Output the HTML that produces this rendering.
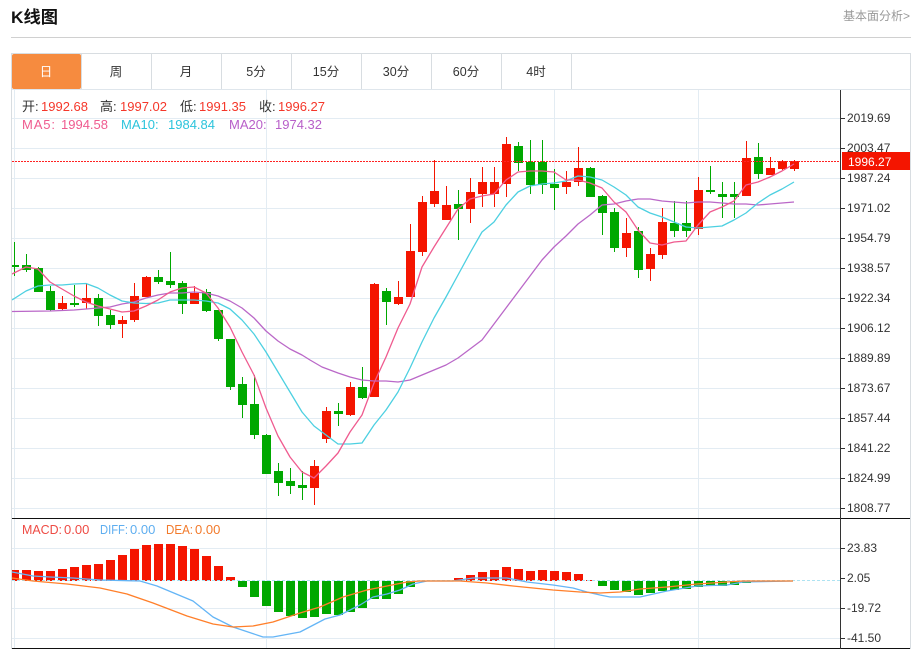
<!DOCTYPE html>
<html lang="zh"><head><meta charset="utf-8"><title>K线图</title>
<style>
html,body{margin:0;padding:0;background:#fff;width:919px;height:649px;overflow:hidden}
svg{display:block}
text{font-family:"Liberation Sans","Noto Sans CJK SC",sans-serif;font-size:13px}
.ax{font-size:12px;fill:#333}
.tab{fill:#333;text-anchor:middle;font-size:12.5px}
polyline{stroke-linejoin:round}
</style></head><body>
<svg width="919" height="649" viewBox="0 0 919 649" xmlns="http://www.w3.org/2000/svg">
<defs><clipPath id="c1"><rect x="12" y="90" width="828" height="428"/></clipPath><clipPath id="c2"><rect x="12" y="519" width="828" height="129"/></clipPath></defs>
<text x="11" y="23" style="font-size:17px;font-weight:bold" fill="#111" textLength="47" lengthAdjust="spacingAndGlyphs">K线图</text>
<text x="910" y="20" style="font-size:12px" fill="#999" text-anchor="end">基本面分析&gt;</text>
<path d="M11 37.5H911" stroke="#d0d0d0" fill="none"/>
<path d="M11.5 53.5H910.5V649M11.5 53V649" stroke="#d8dde1" fill="none"/>
<path d="M12 89.5H910" stroke="#dfe6ec" fill="none"/>
<path d="M81.5 54V89M151.5 54V89M221.5 54V89M291.5 54V89M361.5 54V89M431.5 54V89M501.5 54V89M571.5 54V89" stroke="#d8dde1" fill="none"/>
<rect x="12" y="54" width="69" height="35" rx="2" fill="#f68b3f"/>
<text x="46" y="76" class="tab" style="fill:#fff">日</text>
<text x="116" y="76" class="tab">周</text>
<text x="186" y="76" class="tab">月</text>
<text x="256" y="76" class="tab">5分</text>
<text x="326" y="76" class="tab">15分</text>
<text x="396" y="76" class="tab">30分</text>
<text x="466" y="76" class="tab">60分</text>
<text x="536" y="76" class="tab">4时</text>
<!-- grid -->
<path d="M12 118.5H840M12 148.5H840M12 178.5H840M12 208.5H840M12 238.5H840M12 268.5H840M12 298.5H840M12 328.5H840M12 358.5H840M12 388.5H840M12 418.5H840M12 448.5H840M12 478.5H840M12 508.5H840M12 548.5H840M12 608.5H840M12 638.5H840M14.5 90V648M266.5 90V648M554.5 90V648M698.5 90V648" stroke="#e3ecf3" fill="none"/>
<g clip-path="url(#c1)">
<path fill="none" stroke="#00a800" d="M14.5 242V276M26.5 254V272M38.5 267V292M50.5 286V311M74.5 285V307M98.5 294V326M110.5 310V329M158.5 270V284M170.5 252V288M182.5 281V314M206.5 289V312M218.5 310V341M230.5 339V390M242.5 377V418M254.5 375V439M266.5 434V474M278.5 463V496M290.5 468V494M302.5 471V500M338.5 403V426M362.5 367V399M386.5 288V325M458.5 190V240M518.5 142V171M530.5 140V194M542.5 140V194M554.5 169V210M590.5 167V197M602.5 195V235M614.5 208V252M638.5 227V278M674.5 201V237M686.5 201V237M710.5 166V194M722.5 182V218M734.5 182V218M758.5 143V179"/>
<path fill="none" stroke="#f41500" d="M62.5 296V310M86.5 283V309M122.5 316V338M134.5 283V322M146.5 276V297M194.5 286V304M314.5 460V505M326.5 407V443M350.5 382V416M374.5 283V397M398.5 281V305M410.5 224V297M422.5 196V256M434.5 160V207M446.5 186V220M470.5 178V223M482.5 167V207M494.5 167V207M506.5 137V197M566.5 171V194M578.5 147V186M626.5 218V257M650.5 248V281M662.5 208V259M698.5 177V235M746.5 141V196M770.5 157V175M782.5 160V170M794.5 160V171"/>
<path fill="#00a800" d="M10 265h9v2h-9zM22 265h9v5h-9zM34 268h9v24h-9zM46 291h9v19h-9zM70 303h9v2h-9zM94 298h9v18h-9zM106 315h9v10h-9zM154 277h9v5h-9zM166 281h9v4h-9zM178 283h9v21h-9zM202 292h9v19h-9zM214 310h9v29h-9zM226 339h9v48h-9zM238 384h9v21h-9zM250 404h9v31h-9zM262 435h9v39h-9zM274 471h9v12h-9zM286 481h9v5h-9zM298 485h9v3h-9zM334 411h9v3h-9zM358 387h9v11h-9zM382 291h9v11h-9zM454 204h9v5h-9zM514 146h9v17h-9zM526 162h9v23h-9zM538 162h9v23h-9zM550 184h9v4h-9zM586 168h9v29h-9zM598 196h9v17h-9zM610 212h9v36h-9zM634 231h9v39h-9zM670 223h9v8h-9zM682 223h9v8h-9zM706 190h9v2h-9zM718 194h9v3h-9zM730 194h9v3h-9zM754 157h9v17h-9z"/>
<path fill="#f41500" d="M58 303h9v6h-9zM82 298h9v5h-9zM118 320h9v4h-9zM130 296h9v24h-9zM142 277h9v20h-9zM190 293h9v11h-9zM310 466h9v22h-9zM322 411h9v28h-9zM346 387h9v28h-9zM370 284h9v113h-9zM394 297h9v7h-9zM406 251h9v46h-9zM418 202h9v50h-9zM430 191h9v13h-9zM442 205h9v15h-9zM466 192h9v17h-9zM478 182h9v12h-9zM490 182h9v12h-9zM502 144h9v40h-9zM562 182h9v5h-9zM574 168h9v14h-9zM622 233h9v15h-9zM646 254h9v15h-9zM658 222h9v33h-9zM694 190h9v39h-9zM742 158h9v38h-9zM766 168h9v7h-9zM778 161h9v8h-9zM790 161h9v8h-9z"/>
<polyline fill="none" stroke="#ba68c8" stroke-width="1.3" points="12,311.5 50,311 74,310 86,309 98,308 110,307 122,304 134,302 146,298 158,295 170,293 182,293 194,292 206,293 218,296 230,301 242,308 254,318 266,331 278,341 290,349 302,355 310,360 322,367 338,373 350,377 362,380 374,381 386,381 398,382 410,380 422,375 434,370 446,365 458,358 470,349 482,340 494,324 506,308 518,292 530,276 542,260 554,247 566,236 578,224 590,215 602,205 614,204 626,201 638,199 650,199 662,201 674,202 686,203 698,202 710,202 722,203 734,204 746,204 758,205 770,204 782,203 794,202"/>
<polyline fill="none" stroke="#4dd0e1" stroke-width="1.3" points="12,300 26,291 38,286 50,285 62,285 74,284 86,283.5 98,288 110,295 122,301 134,303 146,303.5 158,303 170,300 182,300 194,300 206,301 218,303 230,309 242,320 254,334 266,352 278,372 290,392 302,412 314,426 326,435 338,444 350,444 362,443 374,425 386,410 398,392 410,368 422,342 434,318 446,297 458,275 470,253 482,232 494,222 506,205 518,192 530,186 542,184 554,183 566,181 578,176 590,177 602,180 614,187 626,195 638,207 650,213 662,217 674,222 686,227 698,228 710,227 722,226 734,220 746,213 758,203 770,195 782,189 794,182"/>
<polyline fill="none" stroke="#ef5b8f" stroke-width="1.3" points="12,274 26,267 38,269 50,282 62,289 74,296 86,302 98,306 110,309 122,312 134,311 146,306 158,300 170,292 182,288 194,287 206,293 218,308 230,327 242,352 254,375 266,408 278,436 290,457 302,472 314,478 326,466 338,453 350,432 362,415 374,383 386,357 398,328 410,304 422,267 434,247 446,228 458,209 470,199 482,196 494,194 506,180 518,172 530,171 542,171 554,172 566,180 578,180 590,183 602,188 614,202 626,212 638,230 650,243 662,245 674,242 686,241 698,225 710,212 722,207 734,201 746,185 758,182 770,177 782,171 794,164"/>
</g>
<path d="M12 161.5H840" stroke="#f22" stroke-dasharray="2 1" fill="none"/>
<!-- MACD -->
<g clip-path="url(#c2)">
<path fill="#f41500" d="M10 570h9v11h-9zM22 570h9v11h-9zM34 571h9v10h-9zM46 571h9v10h-9zM58 569h9v12h-9zM70 567h9v14h-9zM82 565h9v16h-9zM94 564h9v17h-9zM106 560h9v21h-9zM118 555h9v26h-9zM130 549h9v32h-9zM142 545h9v36h-9zM154 544h9v37h-9zM166 544h9v37h-9zM178 546h9v35h-9zM190 549h9v32h-9zM202 556h9v25h-9zM214 566h9v15h-9zM226 577h9v4h-9zM454 578h9v3h-9zM466 575h9v6h-9zM478 572h9v9h-9zM490 570h9v11h-9zM502 567h9v14h-9zM514 569h9v12h-9zM526 571h9v10h-9zM538 570h9v11h-9zM550 571h9v10h-9zM562 572h9v9h-9zM574 574h9v7h-9zM586 580h9v1h-9z"/>
<path fill="#00a800" d="M238 581h9v6h-9zM250 581h9v16h-9zM262 581h9v25h-9zM274 581h9v31h-9zM286 581h9v35h-9zM298 581h9v37h-9zM310 581h9v36h-9zM322 581h9v33h-9zM334 581h9v34h-9zM346 581h9v31h-9zM358 581h9v27h-9zM370 581h9v18h-9zM382 581h9v18h-9zM394 581h9v13h-9zM406 581h9v6h-9zM598 581h9v5h-9zM610 581h9v9h-9zM622 581h9v11h-9zM634 581h9v14h-9zM646 581h9v12h-9zM658 581h9v10h-9zM670 581h9v9h-9zM682 581h9v8h-9zM694 581h9v6h-9zM706 581h9v5h-9zM718 581h9v5h-9zM730 581h9v4h-9zM742 581h9v2h-9z"/>
<path d="M12 580.5H840" stroke="#aee3f2" stroke-dasharray="3 2" fill="none"/>
<polyline fill="none" stroke="#64b5f6" stroke-width="1.3" points="12,572 33,576 50,577 73,578 100,580 140,581 157,586 193,601 213,617 233,627 263,637 273,637 300,632 325,619 340,615 360,605 373,597 387,594 400,590 413,584 427,581 453,581 473,578 507,578 527,582 553,585 573,588 587,592 600,595 610,597 640,597 667,591 697,586 727,585 743,582 793,581"/>
<polyline fill="none" stroke="#ff7f2a" stroke-width="1.3" points="12,578 33,581 67,584 100,588 127,594 153,603 187,616 213,624 233,627 253,626 273,622 300,613 320,607 343,597 367,590 387,586 407,582 420,581 460,581 487,583 513,586 553,590 580,592 600,593 620,592 640,589 667,587 697,584 727,582 743,581 793,581"/>
</g>
<path d="M12 518.5H910M12 648.5H910" stroke="#111" fill="none"/>
<path d="M840.5 90V649M840 118.5h5M840 148.5h5M840 178.5h5M840 208.5h5M840 238.5h5M840 268.5h5M840 298.5h5M840 328.5h5M840 358.5h5M840 388.5h5M840 418.5h5M840 448.5h5M840 478.5h5M840 508.5h5M840 548.5h5M840 578.5h5M840 608.5h5M840 638.5h5" stroke="#333" fill="none"/>
<g class="ax">
<text class="ax" x="847" y="122">2019.69</text>
<text class="ax" x="847" y="152">2003.47</text>
<text class="ax" x="847" y="182">1987.24</text>
<text class="ax" x="847" y="212">1971.02</text>
<text class="ax" x="847" y="242">1954.79</text>
<text class="ax" x="847" y="272">1938.57</text>
<text class="ax" x="847" y="302">1922.34</text>
<text class="ax" x="847" y="332">1906.12</text>
<text class="ax" x="847" y="362">1889.89</text>
<text class="ax" x="847" y="392">1873.67</text>
<text class="ax" x="847" y="422">1857.44</text>
<text class="ax" x="847" y="452">1841.22</text>
<text class="ax" x="847" y="482">1824.99</text>
<text class="ax" x="847" y="512">1808.77</text>
<text class="ax" x="847" y="552">23.83</text>
<text class="ax" x="847" y="582">2.05</text>
<text class="ax" x="847" y="612">-19.72</text>
<text class="ax" x="847" y="642">-41.50</text>
</g>
<rect x="842" y="152" width="68" height="18" fill="#f41500"/>
<text x="848" y="166" fill="#fff" style="font-size:12px">1996.27</text>
<!-- legend -->
<text x="22" y="111" fill="#333">开:</text><text x="41" y="111" fill="#f5372a">1992.68</text>
<text x="100" y="111" fill="#333">高:</text><text x="120" y="111" fill="#f5372a">1997.02</text>
<text x="180" y="111" fill="#333">低:</text><text x="199" y="111" fill="#f5372a">1991.35</text>
<text x="259" y="111" fill="#333">收:</text><text x="278" y="111" fill="#f5372a">1996.27</text>
<text x="22" y="129" fill="#ef5b8f" textLength="33">MA5:</text><text x="61" y="129" fill="#ef5b8f">1994.58</text>
<text x="121" y="129" fill="#2cc4dc">MA10:</text><text x="168" y="129" fill="#2cc4dc">1984.84</text>
<text x="229" y="129" fill="#b85fc9">MA20:</text><text x="275" y="129" fill="#b85fc9">1974.32</text>
<text x="22" y="534" fill="#ee4b44" textLength="40" lengthAdjust="spacingAndGlyphs">MACD:</text><text x="64" y="534" fill="#ee4b44">0.00</text>
<text x="100" y="534" fill="#5eaef0" textLength="28" lengthAdjust="spacingAndGlyphs">DIFF:</text><text x="130" y="534" fill="#5eaef0">0.00</text>
<text x="166" y="534" fill="#f27a2b" textLength="27" lengthAdjust="spacingAndGlyphs">DEA:</text><text x="195" y="534" fill="#f27a2b">0.00</text>
</svg>
</body></html>
